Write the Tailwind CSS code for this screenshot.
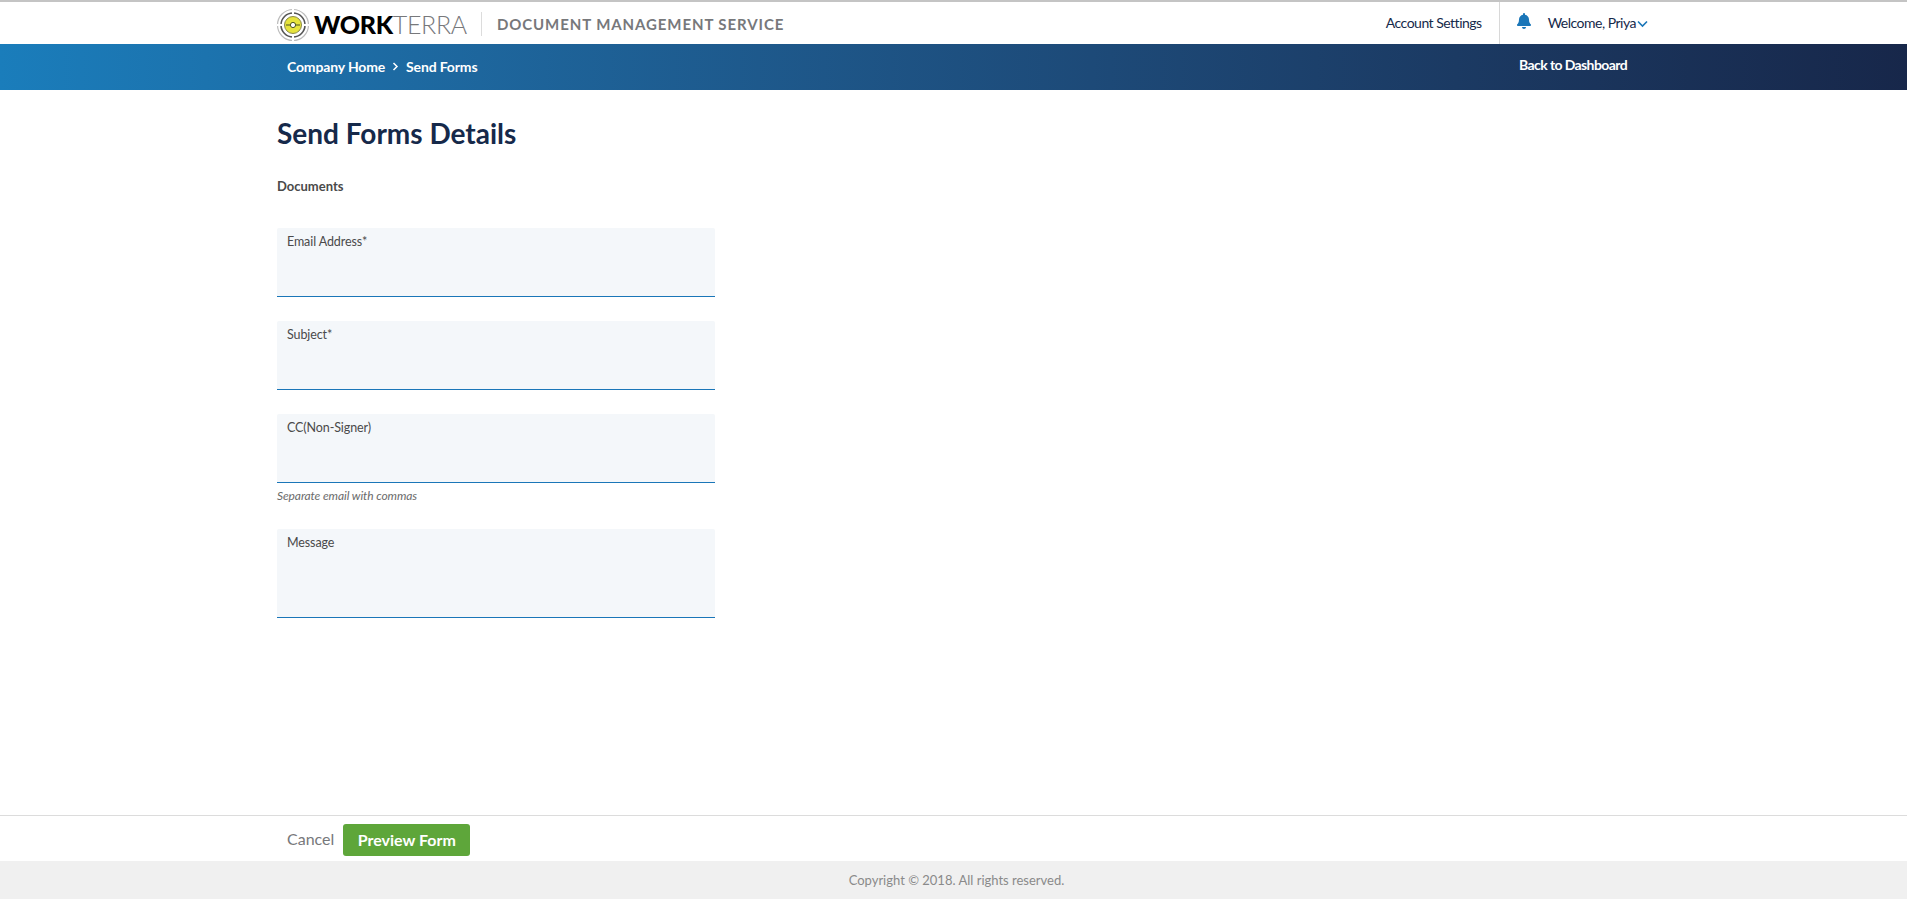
<!DOCTYPE html>
<html lang="en">
<head>
  <meta charset="UTF-8">
  <title>Send Forms Details</title>
  <script src="https://cdn.jsdelivr.net/npm/@tailwindcss/browser@4"></script>
</head>
<body class="bg-white font-['Lato',sans-serif] h-[899px] overflow-hidden flex flex-col text-[#16294a]">

  <!-- Top header -->
  <header class="h-[44px] shrink-0 border-t-2 border-[#c4c4c4] bg-white pl-[277px] flex items-center">
    <svg class="w-[34px] h-[34px] -ml-[1px] mt-[3px] shrink-0" viewBox="0 0 34 34">
      <circle cx="17" cy="17" r="15.5" fill="none" stroke="#bdbdbd" stroke-width="1.2" />
      <circle cx="17" cy="17" r="12" fill="none" stroke="#555" stroke-width="1.6" />
      <circle cx="17" cy="17" r="8.5" fill="#e6e33c" stroke="#8a8a4a" stroke-width="1" />
      <path d="M17 1v7M17 26v7M1 17h7M26 17h7" stroke="#fff" stroke-width="2" />
      <path d="M10 17h14" stroke="#4b5320" stroke-width="1" />
      <circle cx="17" cy="17" r="2.6" fill="#fff" stroke="#4b5320" stroke-width="1" />
    </svg>
    <div class="ml-[4px] mt-[3px] text-[25px] leading-none tracking-[-0.3px] whitespace-nowrap"><span class="font-black text-black">WORK</span><span class="font-light text-[#77787b]">TERRA</span></div>
    <div class="ml-[14px] mt-[2px] h-[24px] w-px bg-[#dcdcdc]"></div>
    <div class="ml-[15px] mt-[2px] text-[15px] font-bold tracking-[0.9px] text-[#77787b] whitespace-nowrap">DOCUMENT MANAGEMENT SERVICE</div>
    <div class="ml-auto flex items-center h-full">
      <a class="text-[14px] tracking-[-0.5px] mb-[1px] text-[#16294a] whitespace-nowrap">Account Settings</a>
      <div class="ml-[17px] w-px h-full bg-[#d8d8d8]"></div>
      <svg class="ml-[17px] w-[14px] h-[16px] mb-[4px] text-[#1a76b8]" viewBox="0 0 448 512" fill="currentColor">
        <path d="M224 512c35 0 64-29 64-64H160c0 35 29 64 64 64zm215-150c-19-21-55-52-55-154 0-78-54-140-128-155V32a32 32 0 1 0-64 0v21C118 68 64 130 64 208c0 102-36 133-55 154-6 6-9 14-9 22 0 16 13 32 32 32h384c19 0 32-16 32-32 0-8-3-16-9-22z" />
      </svg>
      <span class="ml-[17px] text-[14px] tracking-[-0.5px] mb-[1px] text-[#16294a] whitespace-nowrap">Welcome, Priya</span>
      <svg class="w-[11px] h-[8px] ml-[1px] mr-[259px] mt-[2px]" viewBox="0 0 11 8" fill="none" stroke="#1a76b8" stroke-width="1.6">
        <path d="M1 1.5 5.5 6 10 1.5" />
      </svg>
    </div>
  </header>

  <!-- Breadcrumb bar -->
  <div class="h-[46px] shrink-0 bg-gradient-to-r from-[#1a7dbb] to-[#17274a] pl-[287px] pb-[2px] flex items-center text-white text-[14px] font-bold">
    <span class="tracking-[-0.15px]">Company Home</span>
    <svg class="mx-[7px] w-[7px] h-[9px]" viewBox="0 0 7 9" fill="none" stroke="#fff" stroke-width="1.5"><path d="M1.5 1 5 4.5 1.5 8" /></svg>
    <span class="tracking-[-0.15px]">Send Forms</span>
    <a class="ml-auto mr-[280px] mb-[3px] tracking-[-0.6px]">Back to Dashboard</a>
  </div>

  <!-- Form -->
  <main class="flex-1 pl-[277px]">
    <h1 class="mt-[26px] text-[28px] leading-[34px] font-bold text-[#16294a]">Send Forms Details</h1>
    <p class="mt-[27px] text-[13px] leading-[18px] font-bold text-[#4a4a4a]">Documents</p>

    <div class="mt-[33px] w-[438px]">
      <label class="block h-[69px] bg-[#f4f7fa] rounded-t-[2px] border-b border-[#1a76b8] px-[10px] pt-[6px] text-[12.5px] tracking-[-0.1px] leading-[16px] text-[#4a4a4a]">Email Address*</label>
      <label class="block mt-[24px] h-[69px] bg-[#f4f7fa] rounded-t-[2px] border-b border-[#1a76b8] px-[10px] pt-[6px] text-[12.5px] tracking-[-0.1px] leading-[16px] text-[#4a4a4a]">Subject*</label>
      <label class="block mt-[24px] h-[69px] bg-[#f4f7fa] rounded-t-[2px] border-b border-[#1a76b8] px-[10px] pt-[6px] text-[12.5px] tracking-[-0.1px] leading-[16px] text-[#4a4a4a]">CC(Non-Signer)</label>
      <p class="mt-[5px] text-[12px] tracking-[-0.1px] leading-[16px] italic text-[#6b6b6b]">Separate email with commas</p>
      <label class="block mt-[25px] h-[89px] bg-[#f4f7fa] rounded-t-[2px] border-b border-[#1a76b8] px-[10px] pt-[6px] text-[12.5px] tracking-[-0.1px] leading-[16px] text-[#4a4a4a]">Message</label>
    </div>
  </main>

  <!-- Actions -->
  <div class="h-[46px] shrink-0 border-t border-[#dcdcdc] pl-[287px] flex items-center">
    <a class="text-[16px] text-[#77787b] mt-[1px]">Cancel</a>
    <button class="ml-[9px] mt-[3px] w-[127px] h-[32px] bg-[#5ea63a] rounded-[3px] text-white text-[16px] font-bold">Preview Form</button>
  </div>

  <!-- Footer -->
  <footer class="h-[38px] shrink-0 bg-[#f0f0f0] pl-[6px] pt-[2px] flex items-center justify-center text-[13px] text-[#8a8a8a]">
    Copyright © 2018. All rights reserved.
  </footer>
</body>
</html>
